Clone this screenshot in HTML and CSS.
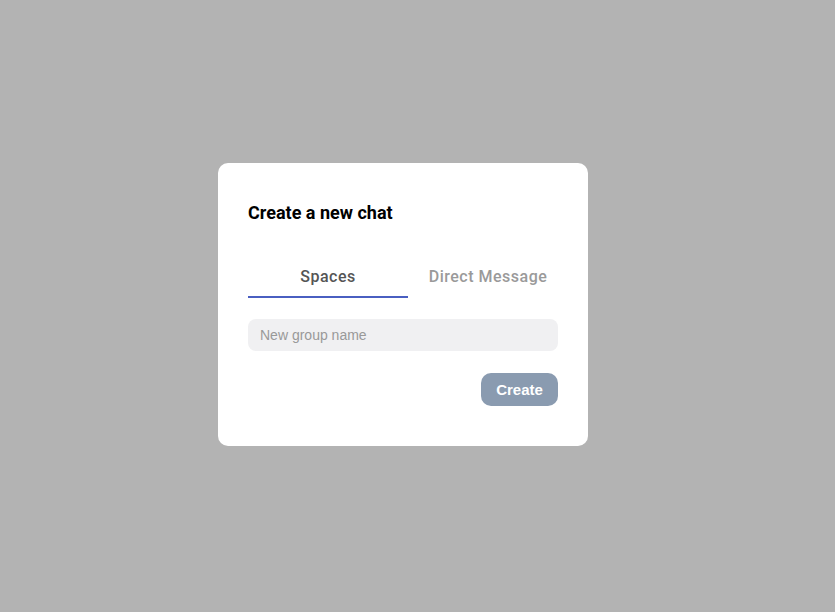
FILE: index.html
```html
<!DOCTYPE html>
<html lang="en">
  <head>
    <meta charset="utf-8">
    <link rel="stylesheet" href="styles.css">
    <title>Create a new chat</title>
  </head>
  <body>
    <div class="overlay">
      <div class="modal">
        <h2 class="title">Create a new chat</h2>

        <div class="tabs">
          <div class="tab active">Spaces</div>
          <div class="tab">Direct Message</div>
        </div>

        <input class="input-text" type="text" placeholder="New group name">

        <div class="actions">
          <button class="button" type="button">Create</button>
        </div>
      </div>
    </div>
  </body>
</html>
```

FILE: styles.css
```css
body {
  margin: 0;
  background-color: #b3b3b3;
  font-family: Roboto, "Liberation Sans", sans-serif;
}

.overlay {
  height: 612px;
  display: flex;
  align-items: center;
  justify-content: center;
  padding-right: 29px;
  padding-bottom: 3px;
  box-sizing: border-box;
}

.modal {
  width: 370px;
  box-sizing: border-box;
  padding: 30px 30px 40px 30px;
  background-color: white;
  border-radius: 10px;
}

.title {
  margin: 0;
  font-size: 18px;
  font-weight: 700;
  color: #000;
  line-height: 24px;
  margin-top: 8px;
}

.tabs {
  display: flex;
  margin-top: 37px;
  width: 320px;
}

.tab {
  width: 160px;
  text-align: center;
  font-size: 16px;
  font-weight: 500;
  letter-spacing: 0.5px;
  color: #9a9a9a;
  padding: 5px 0 10px 0;
  border-bottom: 2px solid transparent;
}

.tab.active {
  color: #555;
  border-bottom-color: #4a5fc1;
}

.input-text {
  display: block;
  width: 100%;
  height: 32px;
  box-sizing: border-box;
  margin-top: 21px;
  padding: 0 12px;
  border: none;
  border-radius: 8px;
  background-color: #f0f0f2;
  font-family: "Liberation Sans", Arial, sans-serif;
  font-size: 14px;
  outline: none;
}

.input-text::placeholder {
  color: #999;
}

.actions {
  display: flex;
  justify-content: flex-end;
  margin-top: 22px;
}

.button {
  width: 77px;
  height: 33px;
  border: none;
  border-radius: 10px;
  background-color: #8a9bb0;
  color: white;
  font-family: "Liberation Sans", Arial, sans-serif;
  font-size: 15px;
  font-weight: 700;
}
```
